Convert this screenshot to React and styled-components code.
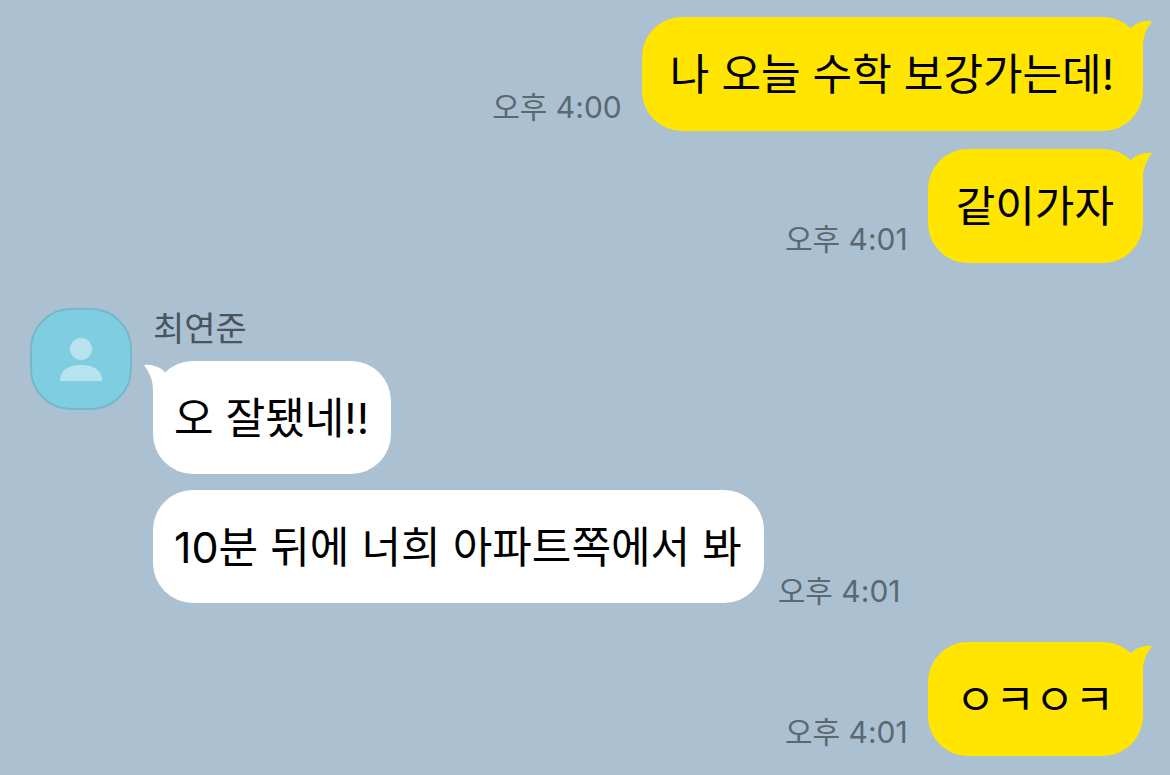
import styled, { createGlobalStyle } from "styled-components";

const skyBlue = "#abc0d1";
const bubbleYellow = "#ffe500";

const GlobalStyle = createGlobalStyle`
  * {
    box-sizing: border-box;
  }
  body {
    margin: 0;
    background-color: ${skyBlue};
    font-family: Inter, "Noto Sans CJK KR", sans-serif;
  }
`;

const ChatRoom = styled.main`
  display: flex;
  flex-direction: column;
  gap: 39px;
  padding: 17px 27px 19px 30px;
`;

const MyMessages = styled.section`
  display: flex;
  flex-direction: column;
  gap: 18px;
`;

const FriendMessages = styled.section`
  display: flex;
  align-items: flex-start;
  gap: 21px;
  padding-top: 6px;
`;

const FriendColumn = styled.div`
  display: flex;
  flex-direction: column;
  gap: 16px;
`;

const MessageRow = styled.div`
  display: flex;
  justify-content: ${(props) => (props.$mine ? "flex-end" : "flex-start")};
  align-items: flex-end;
  gap: ${(props) => (props.$mine ? "20px" : "14px")};
`;

const Bubble = styled.p`
  position: relative;
  margin: 0;
  padding: ${(props) => (props.$mine ? "27px 29px 27px 28px" : "27px 22px 26px 21px")};
  border-radius: 40px;
  background-color: ${(props) => (props.$mine ? bubbleYellow : "white")};
  color: black;
  font-size: 43px;
  line-height: 60px;
`;

const Tail = styled.svg`
  position: absolute;
  top: 3px;
  width: 24px;
  height: 40px;
  ${(props) => (props.$mine ? "right: -10px;" : "left: -10px;")}
  fill: ${(props) => (props.$mine ? bubbleYellow : "white")};
`;

const Time = styled.time`
  padding-bottom: ${(props) => (props.$mine ? "12px" : "0")};
  color: #5a6871;
  font-size: 30px;
  line-height: 24px;
  white-space: nowrap;
`;

const Name = styled.h2`
  margin: 0 0 -4px;
  color: #48545e;
  font-size: 34px;
  font-weight: 400;
  line-height: 41px;
`;

const Avatar = styled.svg`
  flex: none;
  width: 102px;
  height: 102px;
`;

const MyMessage = ({ text, time }) => (
  <MessageRow $mine>
    <Time $mine>{time}</Time>
    <Bubble $mine>
      {text}
      <Tail $mine viewBox="0 0 24 40" aria-hidden="true">
        <path d="M2 8C7 3 15 0 23 1C18 8 14 15 14 27V40H2Z" />
      </Tail>
    </Bubble>
  </MessageRow>
);

const FriendMessage = ({ text, time, tail }) => (
  <MessageRow>
    <Bubble>
      {text}
      {tail && (
        <Tail viewBox="0 0 24 40" aria-hidden="true">
          <path d="M22 8C17 3 9 0 1 1C6 8 10 15 10 27V40H22Z" />
        </Tail>
      )}
    </Bubble>
    {time && <Time>{time}</Time>}
  </MessageRow>
);

export default function App() {
  return (
    <>
      <GlobalStyle />
      <ChatRoom>
        <MyMessages>
          <MyMessage text="나 오늘 수학 보강가는데!" time="오후 4:00" />
          <MyMessage text="같이가자" time="오후 4:01" />
        </MyMessages>
        <FriendMessages>
          <Avatar viewBox="0 0 102 102" aria-hidden="true">
            <rect
              x="1"
              y="1"
              width="100"
              height="100"
              rx="40"
              fill="#7fcde0"
              stroke="#74b8ca"
              strokeWidth="2"
            />
            <circle cx="51" cy="41" r="11" fill="#b8e3ec" />
            <path d="M30 73C30 61 40 57 51 57S72 61 72 73Z" fill="#b8e3ec" />
          </Avatar>
          <FriendColumn>
            <Name>최연준</Name>
            <FriendMessage text="오 잘됐네!!" tail />
            <FriendMessage text="10분 뒤에 너희 아파트쪽에서 봐" time="오후 4:01" />
          </FriendColumn>
        </FriendMessages>
        <MyMessages>
          <MyMessage text="ㅇㅋㅇㅋ" time="오후 4:01" />
        </MyMessages>
      </ChatRoom>
    </>
  );
}
